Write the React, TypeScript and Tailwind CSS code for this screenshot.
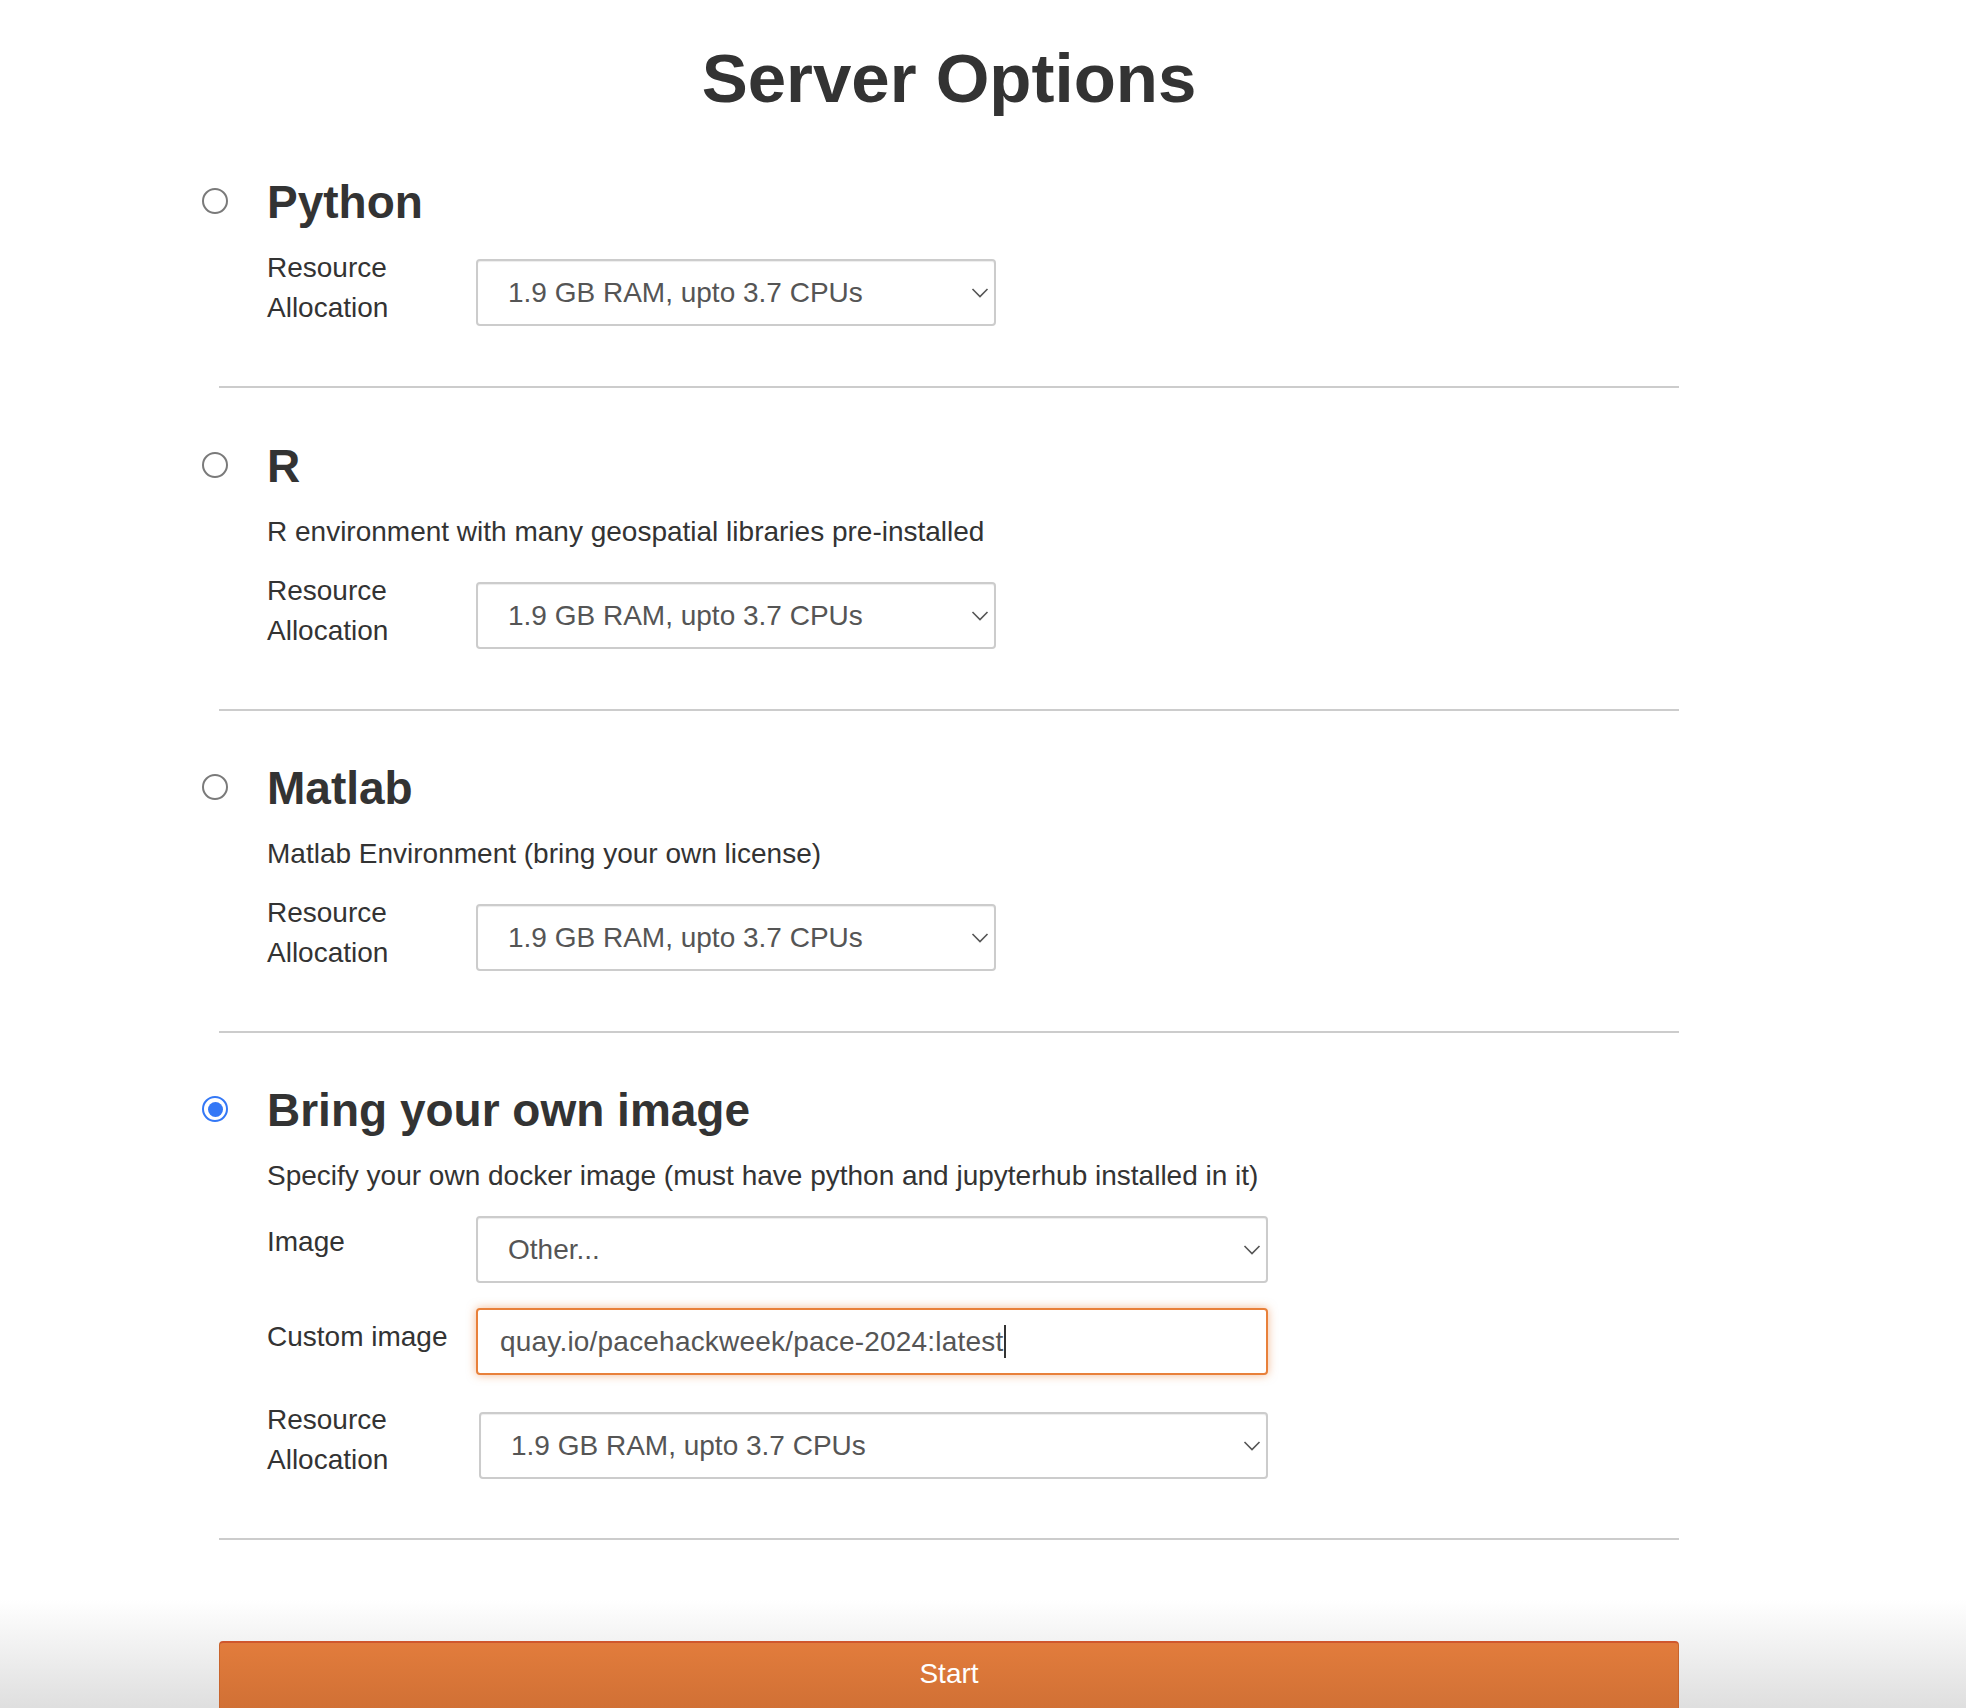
import { ReactNode } from "react";

function Radio({ checked }: { checked?: boolean }) {
  if (checked) {
    return (
      <span className="flex h-[26px] w-[26px] items-center justify-center rounded-full border-[2.5px] border-[#3478f6] bg-white">
        <span className="h-[15px] w-[15px] rounded-full bg-[#3478f6]" />
      </span>
    );
  }
  return (
    <span className="block h-[26px] w-[26px] rounded-full border-[2.5px] border-[#7a7a7a] bg-white" />
  );
}

function SelectBox({ value, className }: { value: string; className: string }) {
  return (
    <div className={`relative ${className}`}>
      <select
        defaultValue={value}
        className="h-[67px] w-full appearance-none rounded-[4px] border-2 border-[#cccccc] bg-white pl-[30px] pr-[40px] text-[28px] text-[#555555] shadow-[inset_0_1px_1px_rgba(0,0,0,0.075)] outline-none"
      >
        <option>{value}</option>
      </select>
      <svg
        width="18"
        height="12"
        viewBox="0 0 18 12"
        className="pointer-events-none absolute right-[7px] top-1/2 -translate-y-1/2"
      >
        <polyline
          points="1.5,2 9,9.5 16.5,2"
          fill="none"
          stroke="#555555"
          strokeWidth="1.6"
        />
      </svg>
    </div>
  );
}

function ResourceRow({ wide }: { wide?: boolean }) {
  return (
    <div className="flex items-start">
      <label className="w-[209px] shrink-0">Resource Allocation</label>
      <div className={wide ? "ml-[3px] mt-[12px]" : "mt-[11px]"}>
        <SelectBox
          value="1.9 GB RAM, upto 3.7 CPUs"
          className={wide ? "w-[789px]" : "w-[520px]"}
        />
      </div>
    </div>
  );
}

function Section({
  title,
  checked,
  description,
  top,
  children,
}: {
  title: string;
  checked?: boolean;
  description?: string;
  top: string;
  children: ReactNode;
}) {
  return (
    <div className={`border-b-2 border-[#cccccc] pb-[58px] ${top}`}>
      <div className="flex items-start">
        <div className="-ml-[17px] w-[65px] shrink-0 pt-[11px]">
          <Radio checked={checked} />
        </div>
        <div className="flex-1">
          <h3 className="text-[46px] font-bold leading-[50px] text-[#333333]">
            {title}
          </h3>
          <div className="mt-[21px]">
            {description && (
              <p className={checked ? "mb-[20px]" : "mb-[19px]"}>
                {description}
              </p>
            )}
            {children}
          </div>
        </div>
      </div>
    </div>
  );
}

export default function App() {
  return (
    <div className="h-[1708px] overflow-hidden bg-white font-['Liberation_Sans',Arial,sans-serif] text-[28px] leading-[40px] text-[#333333]">
      <div className="ml-[219px] w-[1460px]">
        <h1 className="pt-[39px] text-center text-[69px] font-bold leading-[80px] text-[#333333]">
          Server Options
        </h1>

        <Section title="Python" top="pt-[58px]">
          <ResourceRow />
        </Section>

        <Section
          title="R"
          top="pt-[53px]"
          description="R environment with many geospatial libraries pre-installed"
        >
          <ResourceRow />
        </Section>

        <Section
          title="Matlab"
          top="pt-[52px]"
          description="Matlab Environment (bring your own license)"
        >
          <ResourceRow />
        </Section>

        <Section
          title="Bring your own image"
          checked
          top="pt-[52px]"
          description="Specify your own docker image (must have python and jupyterhub installed in it)"
        >
          <div className="mb-[25px] flex items-start">
            <label className="mt-[6px] w-[209px] shrink-0">Image</label>
            <SelectBox value="Other..." className="w-[792px]" />
          </div>
          <div className="mb-[25px] flex items-start">
            <label className="mt-[9px] w-[209px] shrink-0">Custom image</label>
            <div className="flex h-[67px] w-[792px] items-center rounded-[4px] border-2 border-[#e8803a] bg-white pl-[22px] text-[#555555] shadow-[0_0_10px_rgba(232,128,58,0.55)]">
              <span className="tracking-[0.2px]">quay.io/pacehackweek/pace-2024:latest</span>
              <span className="ml-[1px] inline-block h-[33px] w-[2px] bg-[#333333]" />
            </div>
          </div>
          <ResourceRow wide />
        </Section>
      </div>

      <div className="h-[170px] bg-[linear-gradient(to_bottom,#ffffff_35%,#dedede)] pt-[101px]">
        <div className="ml-[219px] h-[96px] w-[1460px] rounded-t-[4px] border-x border-t-2 border-x-[#c8642c] border-t-[#cf572d] bg-[linear-gradient(to_bottom,#e27c3c,#c96b32)] pt-[11px] text-center text-[28px] leading-[40px] text-white">
          Start
        </div>
      </div>
    </div>
  );
}
